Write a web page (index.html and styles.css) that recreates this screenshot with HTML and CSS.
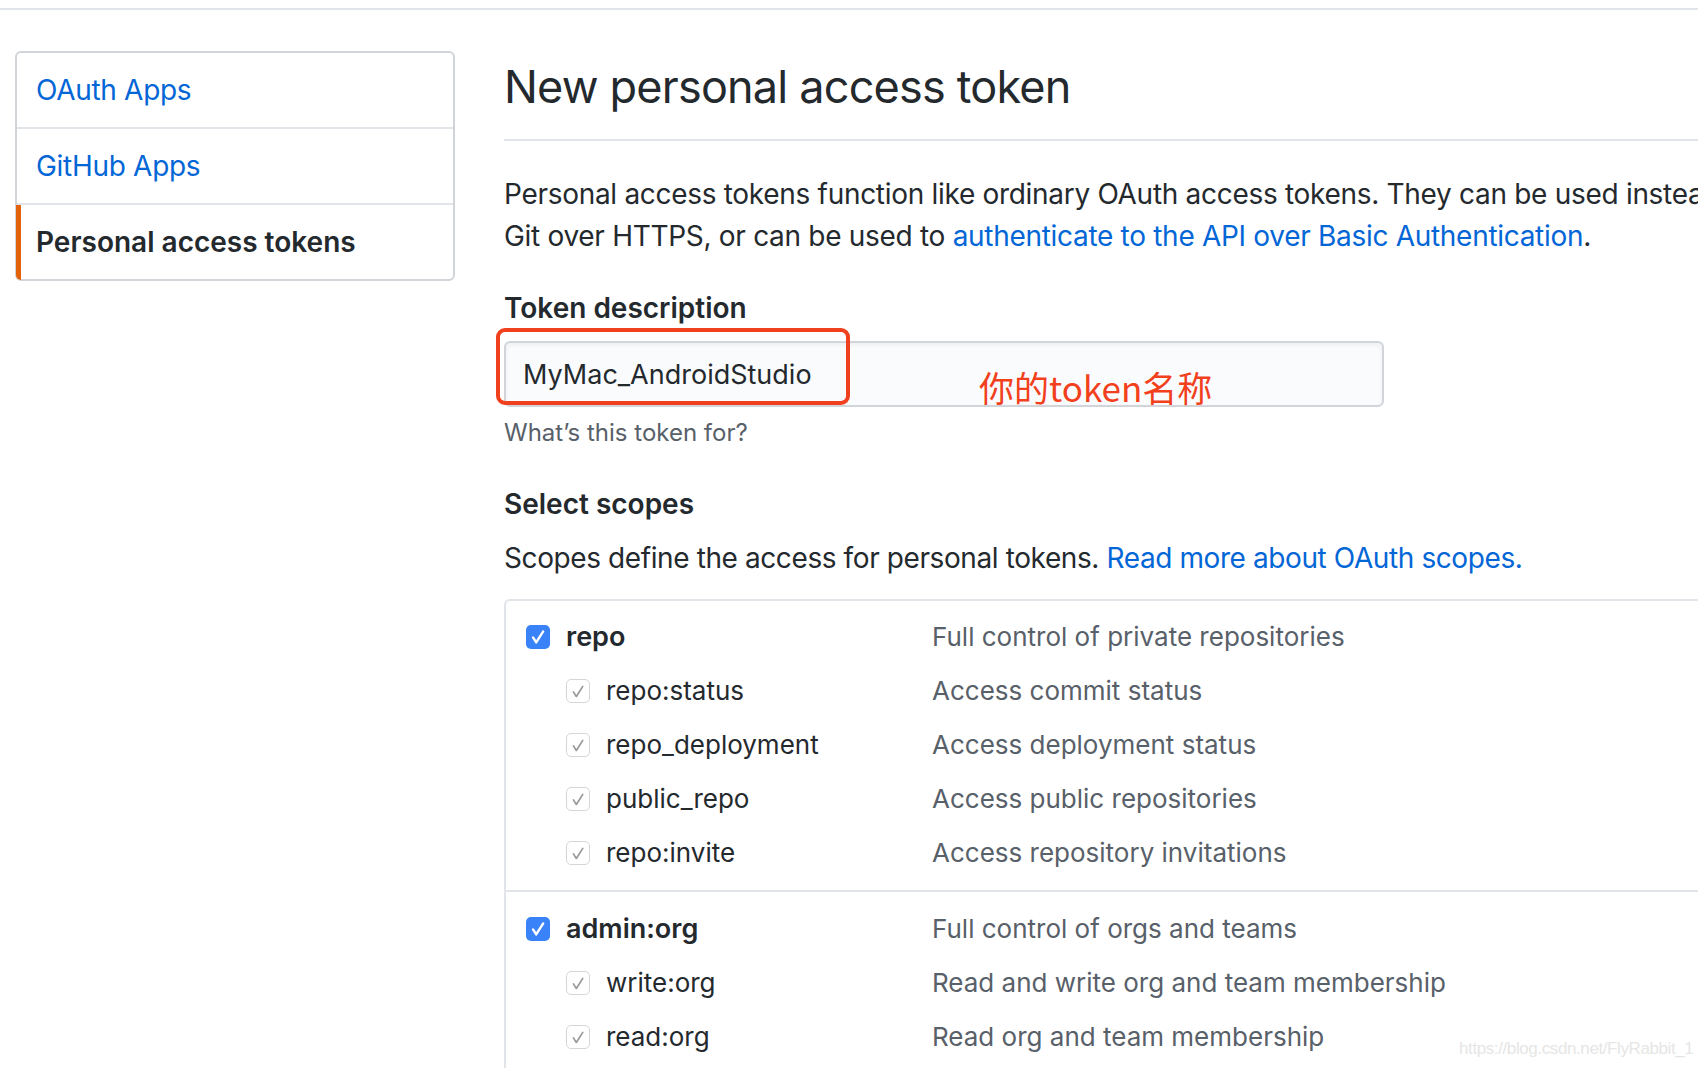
FILE: index.html
```html
<!DOCTYPE html>
<html lang="en">
<head>
<meta charset="utf-8">
<title>New personal access token</title>
<link rel="stylesheet" href="styles.css">
</head>
<body>
<div class="topbar"></div>
<div class="layout">
  <nav class="menu">
    <a class="menu-item" href="#">OAuth Apps</a>
    <a class="menu-item" href="#">GitHub Apps</a>
    <a class="menu-item selected" href="#">Personal access tokens</a>
  </nav>
  <main class="main">
    <div class="subhead">
      <h1 class="subhead-heading">New personal access token</h1>
    </div>
    <p class="intro">Personal access tokens function like ordinary OAuth access tokens. They can be used instead of a password for<br>Git over HTTPS, or can be used to <a href="#">authenticate to the API over Basic Authentication</a>.</p>

    <label class="form-label">Token description</label>
    <div class="field">
      <div class="form-control">MyMac_AndroidStudio</div>
      <div class="annot-box"></div>
      <div class="annot-text">你的token名称</div>
    </div>
    <p class="note">What’s this token for?</p>

    <h3 class="form-label scopes-title">Select scopes</h3>
    <p class="scopes-desc">Scopes define the access for personal tokens. <a href="#">Read more about OAuth scopes.</a></p>

    <div class="scopes">
      <ul class="scope-group">
        <li class="scope-row">
          <span class="scope-name"><span class="cb cb-on"><svg viewBox="0 0 24 24"><path d="M7 12.4 L10.2 17.4 L17.2 6.4"/></svg></span><b>repo</b></span>
          <span class="scope-desc">Full control of private repositories</span>
        </li>
        <li class="scope-row sub">
          <span class="scope-name"><span class="cb cb-dim"><svg viewBox="0 0 24 24"><path d="M7 12.4 L10.2 17.4 L17.2 6.4"/></svg></span>repo:status</span>
          <span class="scope-desc">Access commit status</span>
        </li>
        <li class="scope-row sub">
          <span class="scope-name"><span class="cb cb-dim"><svg viewBox="0 0 24 24"><path d="M7 12.4 L10.2 17.4 L17.2 6.4"/></svg></span>repo_deployment</span>
          <span class="scope-desc">Access deployment status</span>
        </li>
        <li class="scope-row sub">
          <span class="scope-name"><span class="cb cb-dim"><svg viewBox="0 0 24 24"><path d="M7 12.4 L10.2 17.4 L17.2 6.4"/></svg></span>public_repo</span>
          <span class="scope-desc">Access public repositories</span>
        </li>
        <li class="scope-row sub">
          <span class="scope-name"><span class="cb cb-dim"><svg viewBox="0 0 24 24"><path d="M7 12.4 L10.2 17.4 L17.2 6.4"/></svg></span>repo:invite</span>
          <span class="scope-desc">Access repository invitations</span>
        </li>
      </ul>
      <ul class="scope-group">
        <li class="scope-row">
          <span class="scope-name"><span class="cb cb-on"><svg viewBox="0 0 24 24"><path d="M7 12.4 L10.2 17.4 L17.2 6.4"/></svg></span><b>admin:org</b></span>
          <span class="scope-desc">Full control of orgs and teams</span>
        </li>
        <li class="scope-row sub">
          <span class="scope-name"><span class="cb cb-dim"><svg viewBox="0 0 24 24"><path d="M7 12.4 L10.2 17.4 L17.2 6.4"/></svg></span>write:org</span>
          <span class="scope-desc">Read and write org and team membership</span>
        </li>
        <li class="scope-row sub">
          <span class="scope-name"><span class="cb cb-dim"><svg viewBox="0 0 24 24"><path d="M7 12.4 L10.2 17.4 L17.2 6.4"/></svg></span>read:org</span>
          <span class="scope-desc">Read org and team membership</span>
        </li>
      </ul>
    </div>
  </main>
</div>
<div class="watermark">https://blog.csdn.net/FlyRabbit_1</div>
</body>
</html>
```
FILE: styles.css
```css
html, body {
  margin: 0;
  padding: 0;
  overflow: hidden;
  background: #fff;
}
body {
  width: 1698px;
  height: 1068px;
  position: relative;
  font-family: Inter, "Noto Sans", "Liberation Sans", sans-serif;
  color: #24292e;
  font-size: 28px;
  line-height: 42px;
}
a { color: #0366d6; text-decoration: none; }

.topbar {
  height: 8px;
  border-bottom: 2px solid #e1e4e8;
}

.layout {
  display: flex;
  align-items: flex-start;
  padding-left: 15px;
  gap: 49px;
}

.menu {
  flex: none;
  width: 440px;
  margin-top: 41px;
  border: 2px solid #d1d5da;
  border-radius: 6px;
  box-sizing: border-box;
  display: flex;
  flex-direction: column;
}
.menu-item {
  position: relative;
  display: block;
  padding: 16px 19px;
  font-size: 28px;
  line-height: 42px;
  letter-spacing: -0.3px;
}
.menu-item + .menu-item { border-top: 2px solid #e1e4e8; }
.menu-item.selected {
  color: #24292e;
  font-weight: 600;
  letter-spacing: 0;
}
.menu-item.selected::before {
  content: "";
  position: absolute;
  left: -1px;
  top: 0;
  bottom: -1px;
  width: 5px;
  background: #e36209;
  border-bottom-left-radius: 5px;
}

.main {
  flex: none;
  width: 1400px;
  padding-top: 47px;
}
.subhead {
  padding-bottom: 22px;
  border-bottom: 2px solid #e1e4e8;
}
.subhead-heading {
  margin: 0;
  font-size: 45px;
  line-height: 60px;
  font-weight: 400;
  letter-spacing: -0.8px;
}

.intro {
  margin: 32px 0 0;
  white-space: nowrap;
  letter-spacing: -0.3px;
}

.form-label {
  display: block;
  margin: 30px 0 0;
  font-size: 28px;
  line-height: 42px;
  font-weight: 600;
}

.field {
  position: relative;
  margin-top: 12px;
  width: 880px;
}
.form-control {
  box-sizing: border-box;
  width: 880px;
  height: 66px;
  padding: 0 17px;
  font-size: 27px;
  line-height: 63px;
  background: #fafbfc;
  border: 2px solid #d1d5da;
  border-radius: 6px;
  box-shadow: inset 0 2px 4px rgba(27, 31, 35, 0.06);
}
.annot-box {
  position: absolute;
  left: -8px;
  top: -13px;
  width: 354px;
  height: 77px;
  box-sizing: border-box;
  border: 4px solid #f0401e;
  border-radius: 9px;
}
.annot-text {
  position: absolute;
  left: 475px;
  top: 25px;
  font-family: "Noto Sans CJK SC", "Noto Sans", sans-serif;
  font-size: 35px;
  line-height: 42px;
  color: #f2401d;
  white-space: nowrap;
}

.note {
  margin: 7px 0 0;
  font-size: 24px;
  line-height: 38px;
  color: #586069;
}

.scopes-title { margin-top: 31px; }

.scopes-desc {
  margin: 12px 0 0;
  letter-spacing: -0.4px;
}

.scopes {
  margin-top: 20px;
  border: 2px solid #e1e4e8;
  border-right: none;
  border-radius: 6px 0 0 6px;
}
.scope-group {
  list-style: none;
  margin: 0;
  padding: 9px 0 10px 20px;
}
.scope-group + .scope-group {
  border-top: 2px solid #e1e4e8;
  padding-top: 10px;
}
.scope-row {
  display: flex;
  align-items: center;
  height: 54px;
  font-size: 26px;
}
.scope-name {
  flex: none;
  width: 406px;
  box-sizing: border-box;
  display: flex;
  align-items: center;
  gap: 16px;
}
.scope-name b { font-weight: 600; font-size: 27px; }
.scope-row.sub .scope-name { padding-left: 40px; }
.scope-desc { color: #586069; }

.cb {
  flex: none;
  width: 24px;
  height: 24px;
  box-sizing: border-box;
  border-radius: 5px;
  display: flex;
  align-items: center;
  justify-content: center;
}
.cb svg { width: 24px; height: 24px; fill: none; stroke-linecap: round; stroke-linejoin: round; }
.cb-on {
  background: #3a82f7;
}
.cb-on svg path { stroke: #fff; stroke-width: 2.4; }
.cb-dim {
  background: #fff;
  border: 1.5px solid #d6d6d6;
}
.cb-dim svg { width: 23px; height: 23px; }
.cb-dim svg path { stroke: #9a9a9a; stroke-width: 1.9; }

.watermark {
  position: absolute;
  left: 1459px;
  top: 1038px;
  font-family: "Liberation Sans", Arial, sans-serif;
  font-size: 17px;
  line-height: 22px;
  letter-spacing: -0.4px;
  color: #e6e6e6;
  white-space: nowrap;
}
```
